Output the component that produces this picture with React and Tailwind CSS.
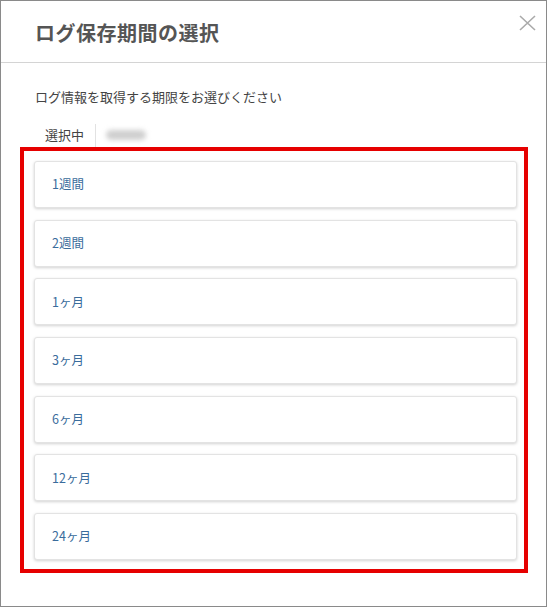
import React from 'react';

const periods = ['1週間', '2週間', '1ヶ月', '3ヶ月', '6ヶ月', '12ヶ月', '24ヶ月'];

const App = () => {
  return (
    <div
      className="relative w-[547px] h-[607px] border border-[#8a8a8a] bg-white text-[#444]"
      style={{ fontFamily: '"Noto Sans CJK JP", "Noto Sans", sans-serif' }}
    >
      <div className="h-[62px] border-b border-[#d4d4d4] flex items-center pl-[34px]">
        <h2 className="text-[20px] font-bold text-[#555] tracking-[0.5px] leading-none pt-[2px]">ログ保存期間の選択</h2>
      </div>
      <button className="absolute top-[13px] right-[10px] w-[18px] h-[18px] flex items-center justify-center">
        <svg width="17" height="16" viewBox="0 0 17 16" fill="none" stroke="#aaa" strokeWidth="1.6">
          <path d="M1 1 L16 15 M16 1 L1 15" />
        </svg>
      </button>

      <div className="pt-[24px]">
        <p className="pl-[34px] text-[13px] leading-[20px] text-[#444]">ログ情報を取得する期限をお選びください</p>
        <div className="mt-[16px] pl-[44px] flex items-center h-[24px]">
          <span className="text-[13px] text-[#444]">選択中</span>
          <span className="ml-[11px] w-px h-[23px] bg-[#e2e2e2]" />
          <span className="ml-[10px] w-[40px] h-[10px] rounded-full bg-[#cfcfcf] blur-[2.5px]" />
        </div>

        <div className="ml-[19px] mt-0 w-[508px] h-[426px] border-[4px] border-[#e60000] pt-[10px] pl-[10px] pr-[7px] flex flex-col gap-[11.7px]">
          {periods.map((p) => (
            <div
              key={p}
              className="h-[47px] shrink-0 rounded-[3px] border border-[#e3e3e3] bg-white shadow-[0_1px_3px_rgba(0,0,0,0.18)] flex items-center pl-[17px] text-[12.5px] text-[#3a6c9c]"
            >
              {p}
            </div>
          ))}
        </div>
      </div>
    </div>
  );
};

export default App;
